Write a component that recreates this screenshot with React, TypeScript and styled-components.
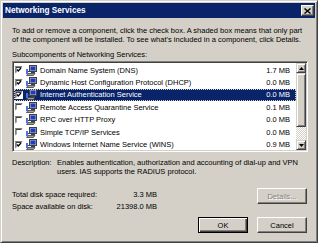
import React from "react"
import styled, { createGlobalStyle } from "styled-components"

const GlobalStyle = createGlobalStyle`
  html, body {
    margin: 0;
    padding: 0;
    background: #ffffff;
  }
  body {
    font-family: "Liberation Sans", Arial, sans-serif;
  }
`

const Window = styled.div`
  box-sizing: border-box;
  width: 318px;
  height: 243px;
  background: #d4d0c8;
  border: 1px solid;
  border-color: #d4d0c8 #404040 #404040 #d4d0c8;
  box-shadow: inset 1px 1px #ffffff, inset -1px -1px #808080;
  padding: 2px;
  display: flex;
  flex-direction: column;
  font-size: 7.5px;
  color: #000000;
`

const TitleBar = styled.div`
  height: 15px;
  background: #0a246a;
  display: flex;
  align-items: center;
  justify-content: space-between;
  padding: 0 1px 0 2px;
`

const Title = styled.span`
  color: #ffffff;
  font-weight: 700;
  font-size: 8.2px;
`

const CloseButton = styled.div`
  box-sizing: border-box;
  width: 13px;
  height: 11px;
  background: #d4d0c8;
  border: 1px solid;
  border-color: #ffffff #404040 #404040 #ffffff;
  box-shadow: inset -1px -1px #808080;
  display: flex;
  align-items: center;
  justify-content: center;
`

const Content = styled.div`
  flex: 1;
  display: flex;
  flex-direction: column;
  padding: 0 7px 0 9px;
`

const Intro = styled.p`
  margin: 9px 0 0;
  line-height: 8.5px;
  white-space: nowrap;
`

const Label = styled.div`
  margin-top: 6px;
  line-height: 9px;
`

const ListBox = styled.div`
  box-sizing: border-box;
  margin-top: 2px;
  height: 91px;
  background: #ffffff;
  border: 1px solid;
  border-color: #808080 #ffffff #ffffff #808080;
  box-shadow: inset 1px 1px #404040, inset -1px -1px #d4d0c8;
  padding: 1px;
  display: flex;
`

const Rows = styled.div`
  flex: 1;
  padding-top: 1px;
`

const Row = styled.div<{ $selected?: boolean }>`
  box-sizing: border-box;
  height: 12.4px;
  display: flex;
  align-items: center;
  padding: 0 6px 0 1px;
  background: ${(p) => (p.$selected ? "#0a246a" : "transparent")};
  color: ${(p) => (p.$selected ? "#ffffff" : "#000000")};
  outline: ${(p) => (p.$selected ? "1px dotted #d4d0c8" : "none")};
  outline-offset: -1px;
  white-space: nowrap;
`

const Name = styled.span`
  flex: 1;
  margin-left: 3px;
`

const Size = styled.span`
  text-align: right;
`

const ScrollBar = styled.div`
  width: 10px;
  display: flex;
  flex-direction: column;
`

const ArrowButton = styled.div`
  box-sizing: border-box;
  width: 10px;
  height: 10px;
  background: #d4d0c8;
  border: 1px solid;
  border-color: #d4d0c8 #404040 #404040 #d4d0c8;
  box-shadow: inset 1px 1px #ffffff, inset -1px -1px #808080;
  display: flex;
  align-items: center;
  justify-content: center;
`

const Track = styled.div`
  flex: 1;
  display: flex;
  flex-direction: column;
  background: repeating-conic-gradient(#ffffff 0 25%, #d4d0c8 0 50%) 0 0 / 2px 2px;
`

const Thumb = styled.div`
  box-sizing: border-box;
  height: 54px;
  background: #d4d0c8;
  border: 1px solid;
  border-color: #d4d0c8 #404040 #404040 #d4d0c8;
  box-shadow: inset 1px 1px #ffffff, inset -1px -1px #808080;
`

const Description = styled.div`
  margin-top: 7px;
  display: grid;
  grid-template-columns: 45px 1fr;
  line-height: 8.5px;
  white-space: nowrap;
`

const Footer = styled.div`
  margin-top: 12px;
  display: flex;
  justify-content: space-between;
  align-items: flex-start;
`

const DiskInfo = styled.div`
  width: 145px;
  display: grid;
  grid-template-columns: 1fr auto;
  grid-auto-rows: 12px;
  align-items: center;
`

const Value = styled.span`
  text-align: right;
`

const Buttons = styled.div`
  margin-top: 5px;
  display: flex;
  justify-content: flex-end;
  gap: 9px;
  padding-right: 1px;
`

const Button = styled.div<{ $default?: boolean; $disabled?: boolean }>`
  box-sizing: border-box;
  width: 50px;
  height: 16px;
  background: #d4d0c8;
  border: 1px solid;
  border-color: ${(p) =>
    p.$default ? "#000000" : "#ffffff #404040 #404040 #ffffff"};
  box-shadow: ${(p) =>
    p.$default
      ? "inset 1px 1px #ffffff, inset -1px -1px #404040, inset -2px -2px #808080"
      : "inset -1px -1px #808080"};
  display: flex;
  align-items: center;
  justify-content: center;
  color: ${(p) => (p.$disabled ? "#808080" : "#000000")};
  text-shadow: ${(p) => (p.$disabled ? "1px 1px #ffffff" : "none")};
  margin-right: ${(p) => (p.$disabled ? "1px" : "0")};
`

const CheckBox = ({ checked }: { checked: boolean }) => (
  <svg width="8" height="8" viewBox="0 0 8 8" style={{ flex: "none" }}>
    <rect x="0" y="0" width="8" height="8" fill="#ffffff" />
    <path d="M0 7.5V0.5H7.5" stroke="#808080" strokeWidth="1" fill="none" />
    <path d="M1 6.5V1.5H6.5" stroke="#404040" strokeWidth="1" fill="none" />
    <path d="M0.5 8H8V0" stroke="#ffffff" strokeWidth="1" fill="none" />
    {checked && (
      <path d="M2 3.5L3.3 5L6 2" stroke="#000000" strokeWidth="1.3" fill="none" />
    )}
  </svg>
)

const NetIcon = () => (
  <svg width="11" height="11" viewBox="0 0 11 11" style={{ flex: "none", marginLeft: 3 }}>
    <rect x="3.5" y="0.5" width="7" height="6" fill="#c0c0c0" stroke="#404040" />
    <rect x="4.5" y="1.5" width="5" height="4" fill="#1c3cc8" />
    <rect x="5" y="7" width="4" height="1" fill="#404040" />
    <path d="M0.5 10.5L2 8.5H9L7.5 10.5Z" fill="#a0a0a0" stroke="#404040" strokeWidth="0.8" />
    <path d="M1 6.5H3" stroke="#1c3cc8" strokeWidth="1" />
    <rect x="0" y="4" width="2" height="5" fill="#5070d8" />
  </svg>
)

const Arrow = ({ up }: { up?: boolean }) => (
  <svg width="5" height="3" viewBox="0 0 5 3">
    <path d={up ? "M0 3H5L2.5 0Z" : "M0 0H5L2.5 3Z"} fill="#000000" />
  </svg>
)

const services = [
  { name: "Domain Name System (DNS)", size: "1.7 MB", checked: true },
  { name: "Dynamic Host Configuration Protocol (DHCP)", size: "0.0 MB", checked: true },
  { name: "Internet Authentication Service", size: "0.0 MB", checked: true, selected: true },
  { name: "Remote Access Quarantine Service", size: "0.1 MB", checked: false },
  { name: "RPC over HTTP Proxy", size: "0.0 MB", checked: false },
  { name: "Simple TCP/IP Services", size: "0.0 MB", checked: false },
  { name: "Windows Internet Name Service (WINS)", size: "0.9 MB", checked: true },
]

export default function App() {
  return (
    <>
      <GlobalStyle />
      <Window>
        <TitleBar>
          <Title>Networking Services</Title>
          <CloseButton>
            <svg width="7" height="6" viewBox="0 0 7 6">
              <path d="M0.5 0.5L6.5 5.5M6.5 0.5L0.5 5.5" stroke="#000000" strokeWidth="1.4" />
            </svg>
          </CloseButton>
        </TitleBar>
        <Content>
          <Intro>
            To add or remove a component, click the check box. A shaded box means that only part
            <br />
            of the component will be installed. To see what's included in a component, click Details.
          </Intro>
          <Label>Subcomponents of Networking Services:</Label>
          <ListBox>
            <Rows>
              {services.map((s) => (
                <Row key={s.name} $selected={s.selected}>
                  <CheckBox checked={s.checked} />
                  <NetIcon />
                  <Name>{s.name}</Name>
                  <Size>{s.size}</Size>
                </Row>
              ))}
            </Rows>
            <ScrollBar>
              <ArrowButton>
                <Arrow up />
              </ArrowButton>
              <Track>
                <Thumb />
              </Track>
              <ArrowButton>
                <Arrow />
              </ArrowButton>
            </ScrollBar>
          </ListBox>
          <Description>
            <span>Description:</span>
            <span>
              Enables authentication, authorization and accounting of dial-up and VPN
              <br />
              users. IAS supports the RADIUS protocol.
            </span>
          </Description>
          <Footer>
            <DiskInfo>
              <span>Total disk space required:</span>
              <Value>3.3 MB</Value>
              <span>Space available on disk:</span>
              <Value>21398.0 MB</Value>
            </DiskInfo>
            <Button $disabled>Details...</Button>
          </Footer>
          <Buttons>
            <Button $default>OK</Button>
            <Button>Cancel</Button>
          </Buttons>
        </Content>
      </Window>
    </>
  )
}
